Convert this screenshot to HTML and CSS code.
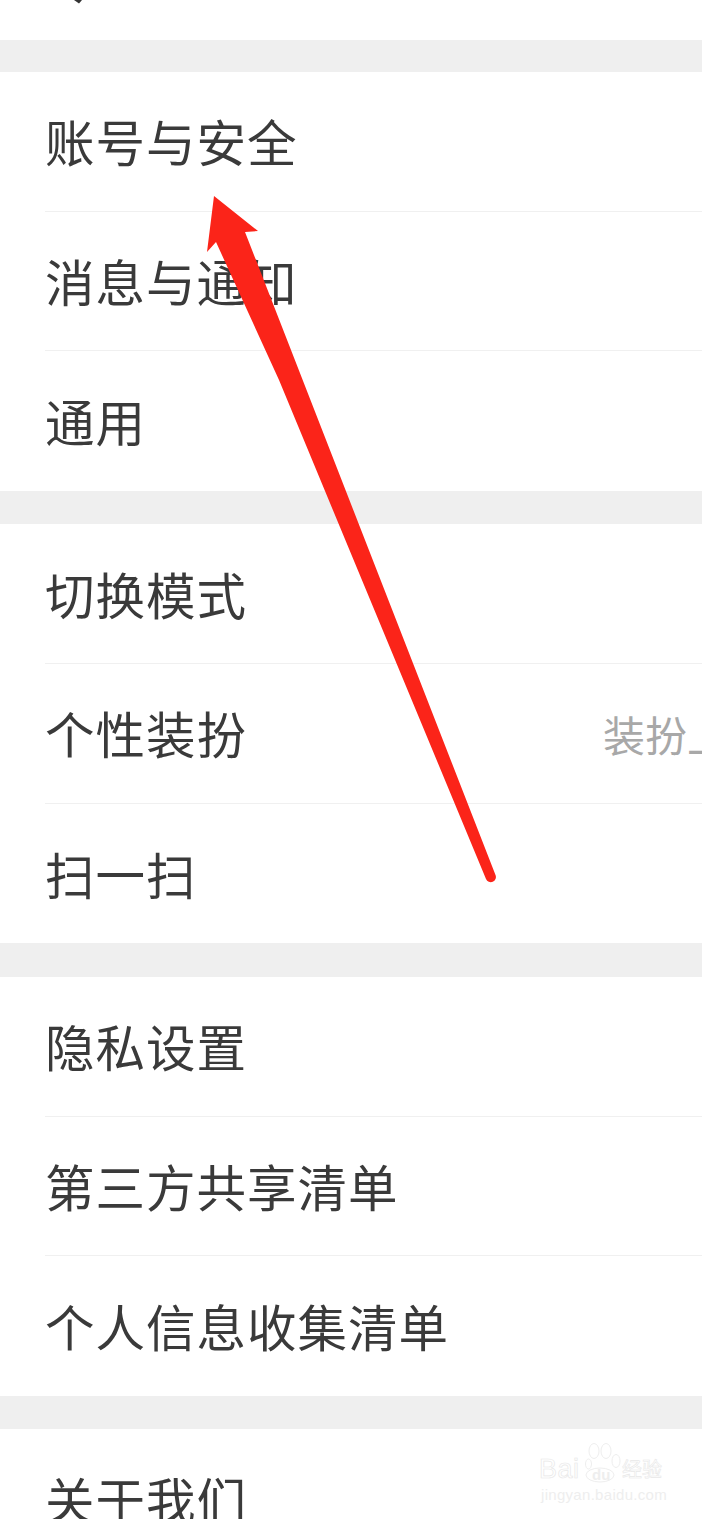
FILE: index.html
```html
<!DOCTYPE html>
<html lang="zh-CN">
<head>
  <meta charset="UTF-8">
  <meta name="viewport" content="width=device-width, initial-scale=1.0">
  <title>设置</title>
  <link rel="stylesheet" href="styles.css">
</head>
<body>
  <div class="page">
    <!-- end of the row cut off by the top of the picture -->
    <div class="group group-top">
      <svg class="top-mark" width="20" height="6" viewBox="0 0 20 6">
        <path d="M6 0 L11 3.5 L14 0 Z" fill="#333"></path>
      </svg>
    </div>

    <div class="group">
      <div class="row"><span class="label">账号与安全</span></div>
      <div class="row"><span class="label">消息与通知</span></div>
      <div class="row"><span class="label">通用</span></div>
    </div>

    <div class="group">
      <div class="row"><span class="label">切换模式</span></div>
      <div class="row">
        <span class="label">个性装扮</span>
        <span class="value">装扮上新</span>
      </div>
      <div class="row"><span class="label">扫一扫</span></div>
    </div>

    <div class="group">
      <div class="row"><span class="label">隐私设置</span></div>
      <div class="row"><span class="label">第三方共享清单</span></div>
      <div class="row"><span class="label">个人信息收集清单</span></div>
    </div>

    <div class="group">
      <div class="row"><span class="label">关于我们</span></div>
    </div>

    <!-- red annotation arrow -->
    <svg class="arrow" width="702" height="1519" viewBox="0 0 702 1519">
      <path d="M214 196 L258 231 L245 232 L495.500 875 A5 5 0 0 1 486 879 L325 491 L279 380 L216 242 L207 252 Z" fill="#fb2419"></path>
    </svg>

    <!-- watermark -->
    <div class="watermark">
      <span class="wm-bai">Bai</span>
      <div class="wm-paw">
        <svg width="36" height="40" viewBox="0 0 36 40" fill="none" stroke="#eeeeee" stroke-width="1">
          <ellipse cx="3.500" cy="21" rx="3" ry="5"></ellipse>
          <ellipse cx="9" cy="8" rx="5" ry="7.500"></ellipse>
          <ellipse cx="21" cy="8" rx="5" ry="7.500"></ellipse>
          <ellipse cx="31" cy="18" rx="4" ry="6.500"></ellipse>
          <ellipse cx="15" cy="32" rx="14" ry="7"></ellipse>
        </svg>
        <span class="wm-du">du</span>
      </div>
      <span class="wm-jy">经验</span>
      <div class="wm-url">jingyan.baidu.com</div>
    </div>
  </div>
</body>
</html>
```

FILE: styles.css
```css
* {
  margin: 0;
  padding: 0;
  box-sizing: border-box;
}

body {
  font-family: "Noto Sans CJK SC", "Liberation Sans", sans-serif;
  background-color: #efefef;
  color: #3a3a3a;
}

.page {
  position: relative;
  width: 702px;
  height: 1519px;
  overflow: hidden;
}

.group {
  background-color: white;
  padding-left: 45px;
  margin-bottom: 33.500px;
}

.group-top {
  height: 40px;
  margin-bottom: 32px;
  padding-left: 0;
}

.top-mark {
  display: block;
  margin-left: 68px;
}

.row {
  display: flex;
  align-items: center;
  justify-content: space-between;
  height: 139.670px;
  border-bottom: 1px solid #f0f0f0;
  overflow: hidden;
}

.row:last-child {
  border-bottom: none;
}

.label {
  font-size: 49.500px;
  line-height: 60px;
  letter-spacing: 1px;
  white-space: nowrap;
}

.value {
  width: 99px;
  margin-top: 2px;
  font-size: 42px;
  line-height: 60px;
  color: #a8a8a8;
  white-space: nowrap;
  overflow: hidden;
  flex-shrink: 0;
}

.arrow {
  position: absolute;
  left: 0;
  top: 0;
}

/* sits over the page corner, so it is placed by hand */
.watermark {
  position: absolute;
  left: 538px;
  top: 1443px;
  width: 130px;
  height: 60px;
  color: #eeeeee;
}

.wm-bai {
  position: absolute;
  left: 1px;
  top: 11px;
  font-family: "Liberation Sans", sans-serif;
  font-size: 27px;
  letter-spacing: 0.500px;
  color: transparent;
  -webkit-text-stroke: 0.700px #e8e8e8;
}

.wm-paw {
  position: absolute;
  left: 47px;
  top: 0;
  width: 36px;
  height: 40px;
}

.wm-du {
  position: absolute;
  left: 7px;
  top: 23px;
  font-family: "Liberation Sans", sans-serif;
  font-size: 15px;
  font-weight: bold;
}

.wm-jy {
  position: absolute;
  left: 84px;
  top: 11px;
  font-size: 20px;
  line-height: 30px;
  color: transparent;
  -webkit-text-stroke: 0.600px #e8e8e8;
  white-space: nowrap;
}

.wm-url {
  position: absolute;
  left: 3px;
  top: 43px;
  font-family: "Liberation Sans", sans-serif;
  font-size: 15px;
  letter-spacing: 0.300px;
  white-space: nowrap;
}
```
